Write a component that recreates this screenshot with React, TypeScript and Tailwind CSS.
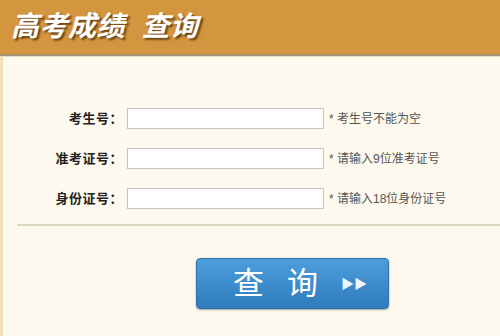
import React from "react";

const rows = [
  { label: "考生号：", hint: "* 考生号不能为空" },
  { label: "准考证号：", hint: "* 请输入9位准考证号" },
  { label: "身份证号：", hint: "* 请输入18位身份证号" },
];

const font = "font-['Liberation_Sans','Noto_Sans_CJK_SC',sans-serif]";

export default function App() {
  return (
    <div className={`w-[500px] h-[336px] overflow-hidden bg-[#fdf9ee] ${font}`}>
      {/* 标题栏 */}
      <div className="h-[54px] bg-[#d4953f] flex items-center pl-[11px]">
        <h1 className="text-[28px] font-bold italic text-white tracking-[0.5px] [text-shadow:2px_2px_2px_rgba(70,40,0,0.75)]">
          高考成绩&nbsp;&nbsp;查询
        </h1>
      </div>
      <div className="h-[2px] bg-[#a99273]" />
      <div className="h-[1px] bg-[#e8dcc4]" />

      {/* 表单 */}
      <div className="h-[279px] border-l-[3px] border-[#f6dfb8] pt-[51px]">
        <div className="flex flex-col gap-[19px]">
          {rows.map((row) => (
            <div key={row.label} className="flex items-center">
              <span className="w-[120px] text-right text-[13px] font-bold text-[#222] tracking-[0.5px]">{row.label}</span>
              <input
                type="text"
                className="ml-[4px] w-[197px] h-[21px] bg-white border border-[#c9c5bb] outline-none"
              />
              <span className="ml-[5px] text-[12px] text-[#555]">{row.hint}</span>
            </div>
          ))}
        </div>

        <div className="mt-[15px] ml-[14px] h-[2px] bg-[#ddd7c0]" />

        <div className="mt-[32px] ml-[193px]">
          <button className="w-[193px] h-[51px] rounded-[4px] border border-[#2d6ea8] bg-gradient-to-b from-[#4d9edb] to-[#2f7bbd] shadow-[0_1px_2px_rgba(0,0,0,0.35)] flex items-center text-white">
            <span className="ml-[36px] text-[31px] leading-none">查</span>
            <span className="ml-[23px] text-[31px] leading-none">询</span>
            <span className="ml-[23px] text-[13px] leading-none tracking-[0px] text-[#eef6ff]">▶▶</span>
          </button>
        </div>
      </div>
    </div>
  );
}
